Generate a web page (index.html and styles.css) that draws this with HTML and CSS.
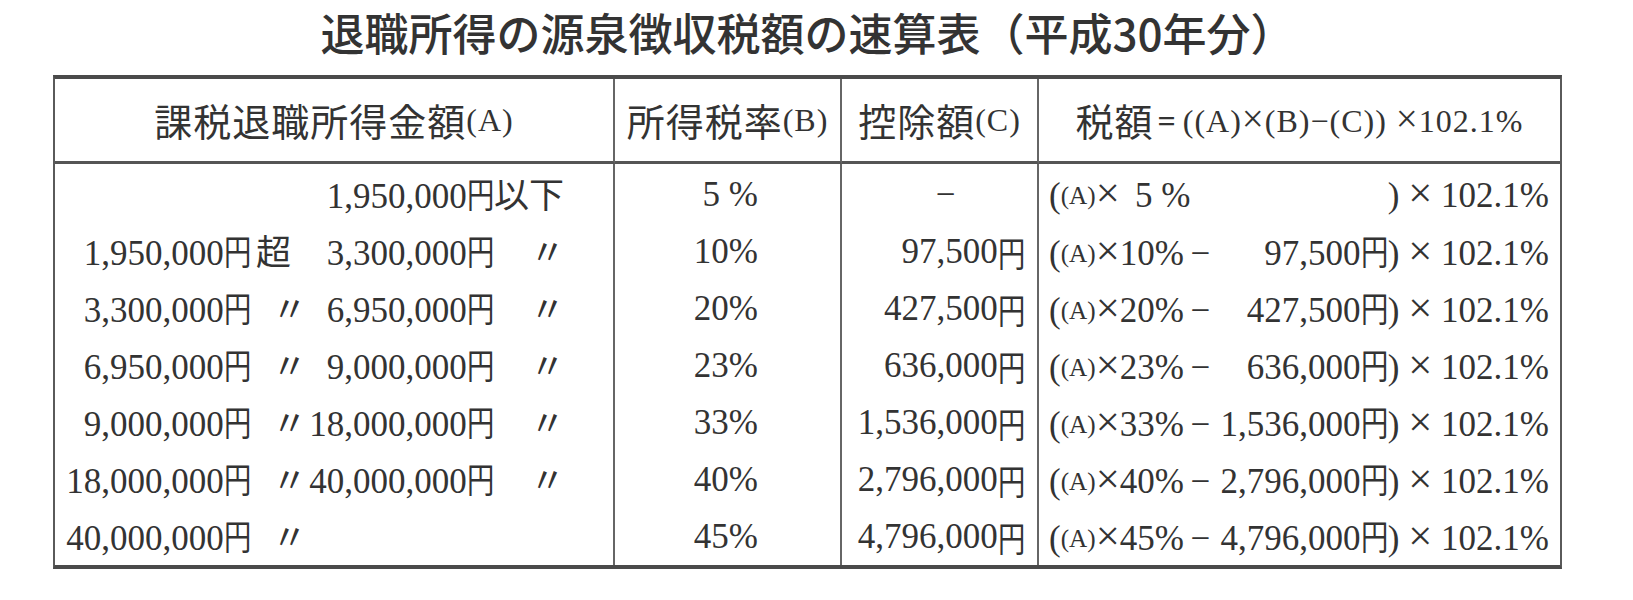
FILE: index.html
```html
<!DOCTYPE html>
<html lang="ja">
<head>
<meta charset="utf-8">
<title>退職所得の源泉徴収税額の速算表</title>
<link rel="stylesheet" href="styles.css">
</head>
<body>
<div class="page">
  <h1 class="title">退職所得の源泉徴収税額の速算表（平成30年分）</h1>
  <div class="sheet">
    <div class="hd c1">課税退職所得金額<span class="lat">(A)</span></div>
    <div class="hd c2">所得税率<span class="lat">(B)</span></div>
    <div class="hd c3">控除額<span class="lat">(C)</span></div>
    <div class="hd c4">税額<span class="lat"><span class="eq">=</span>((A)<span class="x">×</span>(B)−(C)) <span class="x">×</span>102.1%</span></div>

    <div class="td c1 first"><div class="range"><span class="a"></span><span class="b"></span><span class="c">1,950,000<span class="yen">円</span></span><span class="d"><span class="jp">以下</span></span></div></div>
    <div class="td c2 first">5 %</div>
    <div class="td c3 first dash">−</div>
    <div class="td c4 first"><div class="calc"><span class="open">(<span class="sm">(A)</span><span class="x">×</span> <span class="r">5 %</span></span><span class="amt"></span><span class="tail">) <span class="x">×</span> 102.1%</span></div></div>

    <div class="td c1"><div class="range"><span class="a">1,950,000<span class="yen">円</span></span><span class="b"><span class="jp cho">超</span></span><span class="c">3,300,000<span class="yen">円</span></span><span class="d"><span class="jp ditto">〃</span></span></div></div>
    <div class="td c2">10%</div>
    <div class="td c3">97,500<span class="yen">円</span></div>
    <div class="td c4"><div class="calc"><span class="open">(<span class="sm">(A)</span><span class="x">×</span><span class="r">10%</span> −</span><span class="amt">97,500<span class="yen">円</span></span><span class="tail">) <span class="x">×</span> 102.1%</span></div></div>

    <div class="td c1"><div class="range"><span class="a">3,300,000<span class="yen">円</span></span><span class="b"><span class="jp ditto">〃</span></span><span class="c">6,950,000<span class="yen">円</span></span><span class="d"><span class="jp ditto">〃</span></span></div></div>
    <div class="td c2">20%</div>
    <div class="td c3">427,500<span class="yen">円</span></div>
    <div class="td c4"><div class="calc"><span class="open">(<span class="sm">(A)</span><span class="x">×</span><span class="r">20%</span> −</span><span class="amt">427,500<span class="yen">円</span></span><span class="tail">) <span class="x">×</span> 102.1%</span></div></div>

    <div class="td c1"><div class="range"><span class="a">6,950,000<span class="yen">円</span></span><span class="b"><span class="jp ditto">〃</span></span><span class="c">9,000,000<span class="yen">円</span></span><span class="d"><span class="jp ditto">〃</span></span></div></div>
    <div class="td c2">23%</div>
    <div class="td c3">636,000<span class="yen">円</span></div>
    <div class="td c4"><div class="calc"><span class="open">(<span class="sm">(A)</span><span class="x">×</span><span class="r">23%</span> −</span><span class="amt">636,000<span class="yen">円</span></span><span class="tail">) <span class="x">×</span> 102.1%</span></div></div>

    <div class="td c1"><div class="range"><span class="a">9,000,000<span class="yen">円</span></span><span class="b"><span class="jp ditto">〃</span></span><span class="c">18,000,000<span class="yen">円</span></span><span class="d"><span class="jp ditto">〃</span></span></div></div>
    <div class="td c2">33%</div>
    <div class="td c3">1,536,000<span class="yen">円</span></div>
    <div class="td c4"><div class="calc"><span class="open">(<span class="sm">(A)</span><span class="x">×</span><span class="r">33%</span> −</span><span class="amt">1,536,000<span class="yen">円</span></span><span class="tail">) <span class="x">×</span> 102.1%</span></div></div>

    <div class="td c1"><div class="range"><span class="a">18,000,000<span class="yen">円</span></span><span class="b"><span class="jp ditto">〃</span></span><span class="c">40,000,000<span class="yen">円</span></span><span class="d"><span class="jp ditto">〃</span></span></div></div>
    <div class="td c2">40%</div>
    <div class="td c3">2,796,000<span class="yen">円</span></div>
    <div class="td c4"><div class="calc"><span class="open">(<span class="sm">(A)</span><span class="x">×</span><span class="r">40%</span> −</span><span class="amt">2,796,000<span class="yen">円</span></span><span class="tail">) <span class="x">×</span> 102.1%</span></div></div>

    <div class="td c1"><div class="range"><span class="a">40,000,000<span class="yen">円</span></span><span class="b"><span class="jp ditto">〃</span></span><span class="c"></span><span class="d"></span></div></div>
    <div class="td c2">45%</div>
    <div class="td c3">4,796,000<span class="yen">円</span></div>
    <div class="td c4"><div class="calc"><span class="open">(<span class="sm">(A)</span><span class="x">×</span><span class="r">45%</span> −</span><span class="amt">4,796,000<span class="yen">円</span></span><span class="tail">) <span class="x">×</span> 102.1%</span></div></div>
  </div>
</div>
</body>
</html>
```

FILE: styles.css
```css
* {
  box-sizing: border-box;
}

body {
  margin: 0;
  background: #ffffff;
  color: #333333;
  font-family: "Liberation Serif", "Noto Sans CJK JP", serif;
}

.page {
  width: 1509px;
  margin-left: 53px;
}

.title {
  margin: 0 0 11px;
  text-align: center;
  font-family: "Noto Sans CJK JP", sans-serif;
  font-weight: 500;
  font-size: 44px;
  line-height: 64px;
  color: #333333;
  white-space: nowrap;
}

.sheet {
  display: grid;
  grid-template-columns: 560px 227px 197px 1fr;
  width: 1509px;
  border: 2px solid #5a5a5a;
  border-top: 4px solid #4a4a4a;
  border-bottom: 4px solid #4a4a4a;
}

.c1,
.c2,
.c3 {
  border-right: 2px solid #666666;
}

.hd {
  height: 85px;
  border-bottom: 3px solid #555555;
  display: flex;
  align-items: center;
  justify-content: center;
  font-family: "Noto Sans CJK JP", sans-serif;
  font-size: 38px;
  line-height: 1;
  letter-spacing: 1px;
  white-space: nowrap;
}

.lat {
  font-family: "Liberation Serif", serif;
  font-size: 32px;
  letter-spacing: 1px;
}

.eq {
  padding: 0 6px 0 4px;
  font-weight: 700;
}

.x {
  font-size: 1.22em;
  line-height: 0.8;
}

.td {
  height: 57px;
  display: flex;
  align-items: center;
  font-size: 35px;
  line-height: 1;
  white-space: nowrap;
}

.td.first {
  height: 59px;
  padding-top: 2px;
}

.jp {
  font-family: "Noto Sans CJK JP", sans-serif;
}

.yen {
  display: inline-block;
  width: 0.78em;
  text-align: left;
  font-family: "Noto Sans CJK JP", sans-serif;
  transform: scaleX(0.78);
  transform-origin: 0 50%;
}

/* column 1: amount range */
.range {
  display: grid;
  grid-template-columns: 196px 45px 198px 1fr;
  align-items: baseline;
  width: 100%;
}

.range .a,
.range .c {
  text-align: right;
}

.cho {
  padding-left: 5px;
}

.b .ditto {
  padding-left: 21px;
}

.d .ditto {
  padding-left: 36px;
}

/* column 2: rate */
.td.c2 {
  justify-content: flex-end;
  padding-right: 82px;
}

/* column 3: deduction */
.td.c3 {
  justify-content: flex-end;
  padding-right: 12px;
}

.td.c3.dash {
  justify-content: center;
  padding-right: 0;
  padding-left: 12px;
}

/* column 4: formula */
.calc {
  display: flex;
  align-items: baseline;
  width: 100%;
  padding: 0 11px 0 10px;
}

.open {
  flex: none;
}

.sm {
  font-size: 0.72em;
  vertical-align: 3px;
}

.r {
  display: inline-block;
  width: 62px;
  text-align: right;
}

.amt {
  flex: 1;
  text-align: right;
}

.tail {
  flex: none;
}
```
